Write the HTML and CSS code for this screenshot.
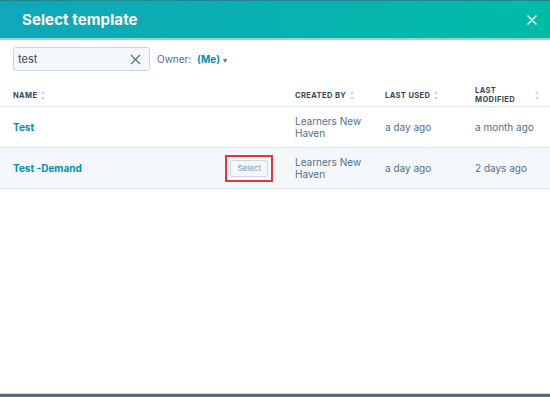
FILE: index.html
```html
<!DOCTYPE html>
<html lang="en">
<head>
    <meta charset="UTF-8">
    <title>Select template</title>
    <link rel="stylesheet" href="styles.css">
</head>
<body>
    <div class="modal">
        <div class="modal-header">
            <h1 class="titulo">Select template</h1>
            <button class="close" aria-label="Close">
                <svg width="10" height="10" viewBox="0 0 10 10"><path d="M1 1L9 9M9 1L1 9" stroke="#fff" stroke-width="1.5" stroke-linecap="round"/></svg>
            </button>
        </div>

        <div class="filters">
            <div class="search">
                <span class="search-text">test</span>
                <svg class="clear" width="11" height="11" viewBox="0 0 11 11"><path d="M1 1L10 10M10 1L1 10" stroke="#516f90" stroke-width="1.2"/></svg>
            </div>
            <div class="owner">Owner: <span class="owner-me">(Me)</span> <span class="caret">&#9662;</span></div>
        </div>

        <div class="tabla">
            <div class="fila cabecera">
                <div class="col">NAME <span class="sort"></span></div>
                <div class="col">CREATED BY <span class="sort"></span></div>
                <div class="col">LAST USED <span class="sort"></span></div>
                <div class="col col-mod"><span>LAST<br>MODIFIED</span> <span class="sort"></span></div>
            </div>
            <div class="fila">
                <div class="col col-name"><a class="nombre">Test</a></div>
                <div class="col">Learners New<br>Haven</div>
                <div class="col">a day ago</div>
                <div class="col">a month ago</div>
            </div>
            <div class="fila activa">
                <div class="col col-name">
                    <a class="nombre">Test -Demand</a>
                    <span class="marca"><button class="btn-select">Select</button></span>
                </div>
                <div class="col">Learners New<br>Haven</div>
                <div class="col">a day ago</div>
                <div class="col">2 days ago</div>
            </div>
        </div>
    </div>
    <div class="barra"></div>
</body>
</html>
```

FILE: styles.css
```css
body {
    margin: 0;
    font-family: "Inter", "Noto Sans", sans-serif;
    color: #33475b;
    background-color: #fff;
    height: 397px;
    display: flex;
    flex-direction: column;
    overflow: hidden;
}
.modal {
    flex: 1;
}
.modal-header {
    height: 40px;
    box-sizing: border-box;
    display: flex;
    align-items: center;
    justify-content: space-between;
    padding: 0 9px 0 22px;
    background: linear-gradient(90deg, #10a7ba, #00bca7);
    border-top: 1px solid #1d8890;
    border-bottom: 2px solid #8ad8cf;
}
.titulo {
    margin: 0;
    font-size: 15px;
    font-weight: 700;
    color: #fff;
    letter-spacing: 0.1px;
}
.close {
    background: none;
    border: none;
    padding: 4px;
    display: flex;
    cursor: pointer;
}
.filters {
    display: flex;
    align-items: center;
    padding: 7px 13px 0;
    gap: 7px;
}
.search {
    width: 137px;
    height: 24px;
    box-sizing: border-box;
    border: 1px solid #cbd6e2;
    background-color: #f5f8fa;
    border-radius: 3px;
    display: flex;
    align-items: center;
    justify-content: space-between;
    padding: 0 8px 0 4px;
}
.search-text {
    font-size: 11px;
    color: #33475b;
}
.owner {
    font-size: 10px;
    color: #516f90;
}
.owner-me {
    font-weight: 700;
    color: #0091ae;
    margin-left: 3px;
}
.caret {
    font-size: 8px;
    color: #516f90;
}
.tabla {
    margin-top: 13px;
}
.fila {
    display: grid;
    grid-template-columns: 282px 90px 90px 1fr;
    padding-left: 13px;
    border-bottom: 1px solid #e5eaf0;
    min-height: 40px;
    align-items: center;
    font-size: 10px;
    line-height: 12px;
    color: #516f90;
}
.cabecera {
    min-height: 22px;
    height: 22px;
    font-size: 7.5px;
    font-weight: 700;
    letter-spacing: 0.4px;
    color: #33475b;
    line-height: 9px;
}
.activa {
    background-color: #f5f8fa;
}
.col {
    display: flex;
    align-items: center;
}
.col-name {
    justify-content: space-between;
    padding-right: 22px;
}
.col-mod {
    justify-content: space-between;
    padding-right: 10px;
}
.sort {
    display: inline-block;
    width: 5px;
    height: 9px;
    margin-left: 4px;
    position: relative;
}
.sort::before, .sort::after {
    content: "";
    position: absolute;
    left: 0;
    border-left: 2.5px solid transparent;
    border-right: 2.5px solid transparent;
}
.sort::before {
    top: 0;
    border-bottom: 3px solid #cbd6e2;
}
.sort::after {
    bottom: 0;
    border-top: 3px solid #cbd6e2;
}
.nombre {
    font-size: 10px;
    font-weight: 700;
    color: #0091ae;
}
.marca {
    border: 2px solid #e3363b;
    padding: 3px 3px;
    display: flex;
}
.btn-select {
    font-family: inherit;
    font-size: 8px;
    color: #7c98b6;
    background-color: #f5f8fa;
    border: 1px solid #cbd6e2;
    border-radius: 3px;
    height: 17px;
    padding: 0 6px;
}
.barra {
    height: 3px;
    border-top: 1px solid #cbd6e2;
    background-color: #5a6b7d;
}
```
